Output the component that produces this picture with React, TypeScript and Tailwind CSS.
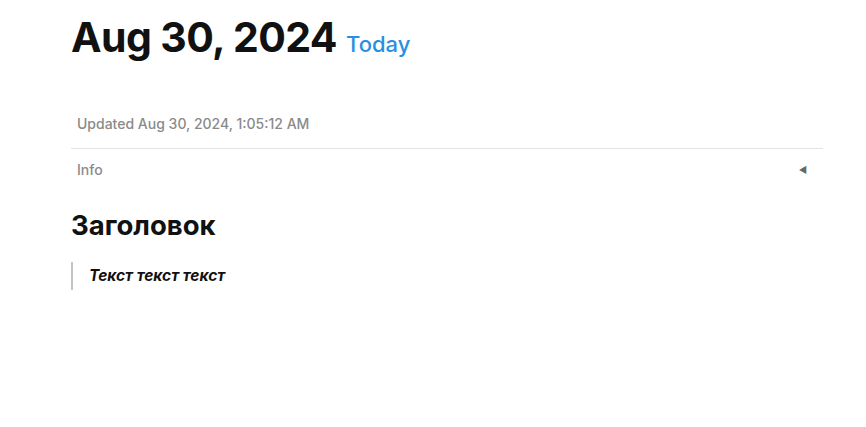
export default function App() {
  return (
    <div className="min-h-screen bg-white font-['Inter',sans-serif] text-[#111]">
      <div className="ml-[71px] mr-[43px] pt-[17px]">
        <h1 className="flex items-baseline gap-[9px] leading-none">
          <span className="text-[41px] font-bold tracking-[-0.6px]">Aug 30, 2024</span>
          <span className="text-[22px] font-medium text-[#2b8fe0]">Today</span>
        </h1>

        <div className="mt-[56px] px-[6px] text-sm font-medium text-[#8a8a8a]">Updated Aug 30, 2024, 1:05:12 AM</div>

        <div className="mt-[14px] border-t border-[#e3e3e3]">
          <div className="flex items-center justify-between px-[6px] py-[11px] text-sm font-medium text-[#8a8a8a]">
            <span>Info</span>
            <span className="mr-[10px] text-[9px] text-[#666]">◀</span>
          </div>
        </div>

        <h2 className="mt-[17px] text-[27.5px] font-bold leading-tight">Заголовок</h2>

        <blockquote className="mt-[20px] border-l-2 border-[#c4c4c4] py-[2px] pl-[16px] text-[15.5px] font-bold italic">
          Текст текст текст
        </blockquote>
      </div>
    </div>
  );
}
